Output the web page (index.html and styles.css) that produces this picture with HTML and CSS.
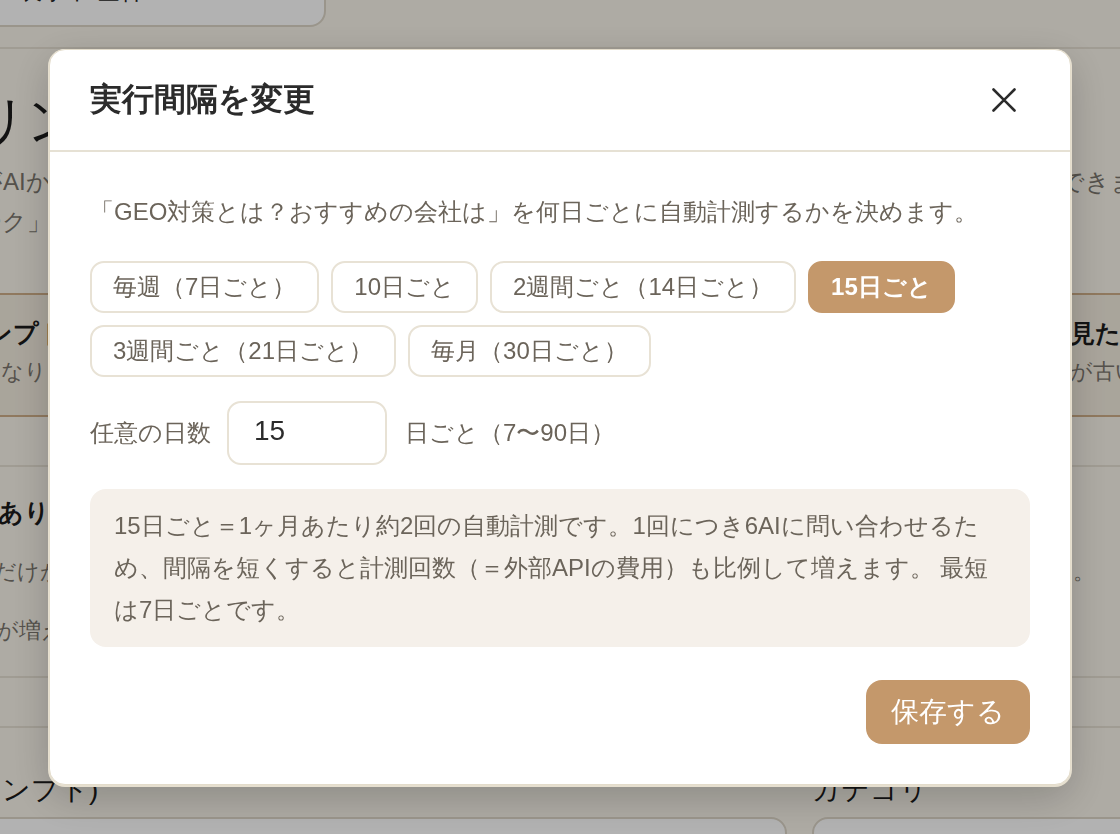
FILE: index.html
```html
<!DOCTYPE html>
<html lang="ja">
<head>
<meta charset="utf-8">
<title>実行間隔を変更</title>
<link rel="stylesheet" href="styles.css">
</head>
<body>
<div class="page">
  <div class="topbar">
    <div class="filter">表示中 全件</div>
  </div>
  <h1 class="page-title">リンク一覧</h1>
  <div class="bg-row sub"><span class="left">がAIか回答します</span><span class="right">できます。</span></div>
  <div class="bg-row sub"><span class="left">ーク」</span><span class="right"></span></div>
  <div class="notice">
    <div class="bg-row strong"><span class="left l-9">ンプト文</span><span class="right r-wide">見たい</span></div>
    <div class="bg-row small"><span class="left">になります</span><span class="right r-wide">が古い</span></div>
  </div>
  <div class="section">
    <div class="bg-row strong first"><span class="left l-20">ありがとう</span><span class="right"></span></div>
    <div class="bg-row small gap"><span class="left l-16">だけが対象</span><span class="right r-narrow">す。</span></div>
    <div class="bg-row small gap2"><span class="left l-18">が増えます</span><span class="right"></span></div>
  </div>
  <div class="section thin"></div>
  <div class="fields">
    <div class="field">
      <div class="field-label field-label-left">プロンプト)</div>
      <div class="field-box"></div>
    </div>
    <div class="field">
      <div class="field-label">カテゴリ</div>
      <div class="field-box"></div>
    </div>
  </div>
</div>

<div class="overlay">
  <div class="modal" role="dialog" aria-labelledby="modal-title">
    <div class="modal-header">
      <h2 id="modal-title" class="modal-title">実行間隔を変更</h2>
      <button class="close-btn" aria-label="閉じる">
        <svg width="26" height="26" viewBox="0 0 26 26" fill="none" stroke="#2b2b2b" stroke-width="2.6" stroke-linecap="round"><path d="M2.5 2.5L23.5 23.5M23.5 2.5L2.5 23.5"/></svg>
      </button>
    </div>
    <div class="modal-body">
      <p class="desc">「GEO対策とは？おすすめの会社は」を何日ごとに自動計測するかを決めます。</p>
      <div class="chips">
        <button class="chip">毎週（7日ごと）</button>
        <button class="chip">10日ごと</button>
        <button class="chip">2週間ごと（14日ごと）</button>
        <button class="chip active">15日ごと</button>
        <button class="chip">3週間ごと（21日ごと）</button>
        <button class="chip">毎月（30日ごと）</button>
      </div>
      <div class="custom">
        <label class="custom-label" for="days">任意の日数</label>
        <input id="days" class="days-input" type="text" value="15">
        <span class="custom-unit">日ごと（7〜90日）</span>
      </div>
      <div class="info">15日ごと＝1ヶ月あたり約2回の自動計測です。1回につき6AIに問い合わせるため、間隔を短くすると計測回数（＝外部APIの費用）も比例して増えます。 最短は7日ごとです。</div>
    </div>
    <div class="modal-footer">
      <button class="save-btn">保存する</button>
    </div>
  </div>
</div>
</body>
</html>
```
FILE: styles.css
```css
* { box-sizing: border-box; }
html, body { margin: 0; padding: 0; }
body {
  width: 1120px;
  height: 834px;
  overflow: hidden;
  background: #f9f5eb;
  font-family: "Hiragino Kaku Gothic ProN", "Hiragino Sans", Meiryo, sans-serif;
  color: #1f1f1f;
}

/* ---------- background page ---------- */
.page { width: 1120px; }
.topbar {
  display: flow-root;
  height: 49px;
  border-bottom: 2px solid #e6e0d3;
}
.filter {
  width: 346px;
  height: 58px;
  margin-left: -20px;
  margin-top: -31px;
  background: #fff;
  border: 2px solid #ddd6c8;
  border-radius: 0 0 16px 16px;
  padding: 8px 0 0 36px;
  font-size: 24px;
  line-height: 24px;
  color: #222;
}
.page-title {
  margin: 41px 0 12px -26px;
  font-size: 52px;
  line-height: 60px;
  font-weight: 500;
  color: #1b1b1b;
  white-space: nowrap;
}
.bg-row {
  display: grid;
  grid-template-columns: 1080px 1fr;
  margin-left: -22px;
  margin-right: -80px;
  white-space: nowrap;
  overflow: hidden;
}
.bg-row.sub { height: 40px; line-height: 40px; font-size: 24px; color: #7a756d; }
.bg-row .left.l-9 { padding-left: 9px; }
.bg-row .left.l-16 { padding-left: 16px; }
.bg-row .left.l-18 { padding-left: 18px; }
.bg-row .left.l-20 { padding-left: 20px; }
.bg-row .right { padding-left: 2px; }
.bg-row .right.r-wide { padding-left: 12px; }
.bg-row .right.r-narrow { padding-left: 0; margin-left: -8px; }
.notice {
  margin-top: 51px;
  border-top: 2px solid #cfae88;
  border-bottom: 2px solid #cfae88;
  background: #f3ecdf;
  padding: 20px 0 25px;
}
.bg-row.strong { height: 36px; line-height: 36px; font-size: 25px; font-weight: 700; color: #1b1b1b; }
.bg-row.small { height: 36px; line-height: 36px; font-size: 22px; color: #7a756d; margin-top: 3px; }
.section {
  margin-top: 48px;
  border-top: 2px solid #e6e0d3;
  border-bottom: 2px solid #e6e0d3;
  padding-bottom: 27px;
}
.section .first { margin-top: 27px; }
.section .gap { margin-top: 24px; }
.section .gap2 { margin-top: 23px; }
.section.thin { margin-top: 0; border-top: none; height: 50px; padding: 0; }
.fields {
  display: grid;
  grid-template-columns: 847px 348px;
  column-gap: 25px;
  margin-left: -60px;
  margin-top: 42px;
}
.field-label {
  height: 40px;
  line-height: 40px;
  font-size: 28px;
  color: #1b1b1b;
  white-space: nowrap;
}
.field-label-left { padding-left: 4px; }
.field-box {
  margin-top: 7px;
  height: 60px;
  background: #fff;
  border: 2px solid #ddd6c8;
  border-radius: 16px;
}

/* ---------- overlay & modal ---------- */
.overlay {
  position: fixed;
  inset: 0;
  background: rgba(0, 0, 0, 0.3);
  display: flex;
  align-items: center;
  justify-content: center;
}
.modal {
  width: 1022px;
  background: #fff;
  border: 1px solid #e3dccb;
  border-radius: 16px;
  box-shadow: 0 1px 0 1px #e6dfcf, 0 12px 40px rgba(0, 0, 0, 0.2);
}
.modal-header {
  height: 102px;
  padding: 0 40px;
  display: flex;
  align-items: center;
  justify-content: space-between;
  border-bottom: 2px solid #e6e1d4;
}
.modal-title {
  margin: 0;
  font-size: 32px;
  font-weight: 700;
  color: #2b2b2b;
}
.close-btn {
  width: 52px;
  height: 52px;
  padding: 0;
  border: none;
  background: transparent;
  display: flex;
  align-items: center;
  justify-content: center;
  cursor: pointer;
}
.modal-body {
  padding: 40px 40px 0;
}
.desc {
  margin: 0 0 29px;
  font-size: 24px;
  line-height: 40px;
  color: #6b645a;
}
.chips {
  display: flex;
  flex-wrap: wrap;
  gap: 12px;
}
.chip {
  height: 52px;
  padding: 0 21px;
  border: 2px solid #e8e2d5;
  border-radius: 14px;
  background: #fff;
  font-family: inherit;
  font-size: 24px;
  line-height: 48px;
  color: #6b645a;
  cursor: pointer;
}
.chip.active {
  background: #c4986b;
  border-color: #c4986b;
  color: #fff;
  font-weight: 700;
}
.custom {
  margin-top: 24px;
  display: flex;
  align-items: center;
  gap: 16px;
}
.custom-label, .custom-unit {
  font-size: 24px;
  color: #6b645a;
}
.custom-unit { margin-left: 2px; }
.days-input {
  width: 160px;
  height: 64px;
  padding: 0 0 4px 25px;
  border: 2px solid #e8e2d5;
  border-radius: 14px;
  font-family: inherit;
  font-size: 28px;
  color: #2b2b2b;
  outline: none;
}
.info {
  margin-top: 24px;
  padding: 16px 32px 16px 24px;
  background: #f5f0ea;
  border-radius: 16px;
  font-size: 24px;
  line-height: 42px;
  color: #6b645a;
}
.modal-footer {
  display: flex;
  justify-content: flex-end;
  padding: 33px 40px 40px;
}
.save-btn {
  height: 64px;
  padding: 0 25px;
  border: none;
  border-radius: 16px;
  background: #c4986b;
  color: #fff;
  font-family: inherit;
  font-size: 28px;
  cursor: pointer;
}
```
